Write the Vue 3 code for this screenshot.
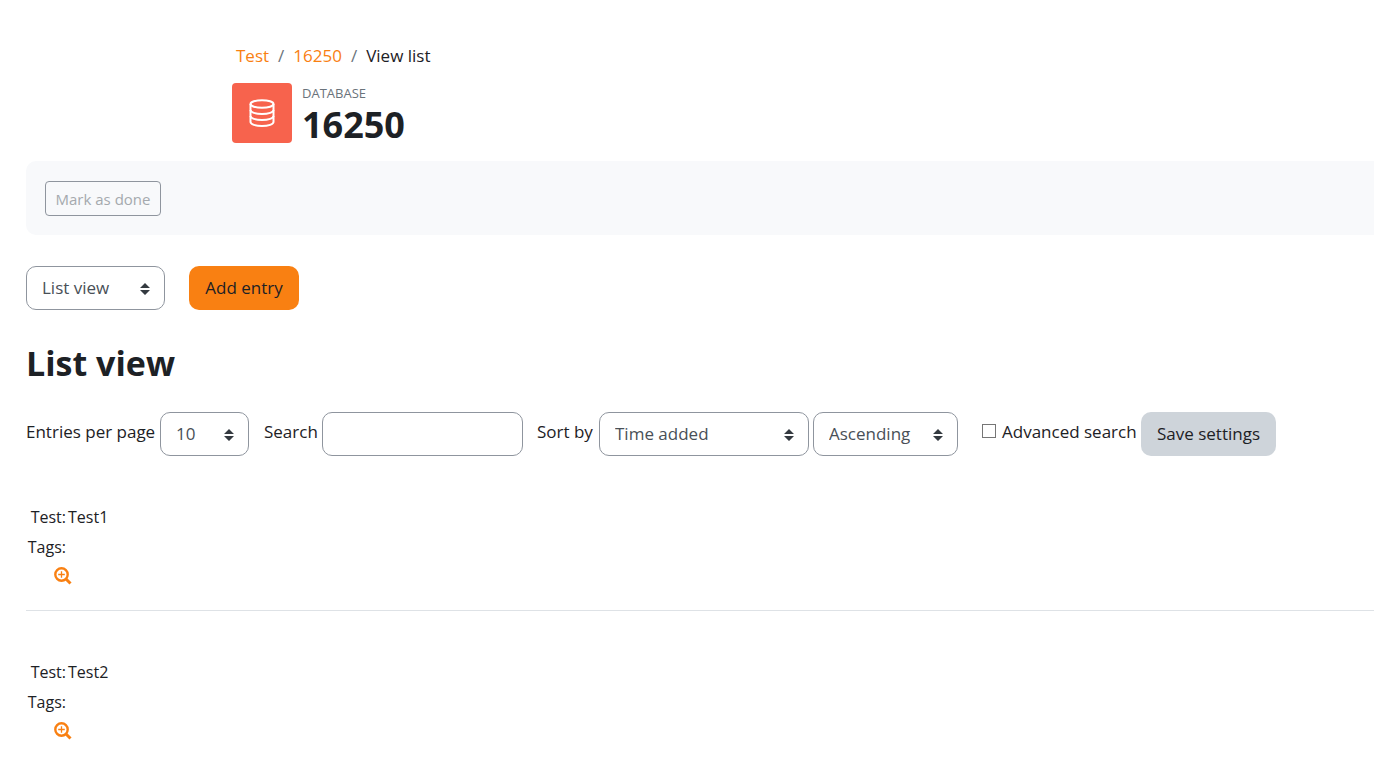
<script setup>
import { ref } from 'vue'

const viewMode = ref('List view')
const perPage = ref('10')
const keyword = ref('')
const sortField = ref('Time added')
const sortOrder = ref('Ascending')
const advanced = ref(false)

// database entries shown in the list
const entries = [
  { id: 1, value: 'Test1' },
  { id: 2, value: 'Test2' }
]
</script>

<template>
  <div class="page">
    <header class="page-header">
      <nav class="breadcrumb" aria-label="Breadcrumb">
        <a href="#">Test</a>
        <span class="divider">/</span>
        <a href="#">16250</a>
        <span class="divider">/</span>
        <span>View list</span>
      </nav>
      <div class="activity">
        <div class="activity-icon">
          <svg viewBox="0 0 26 28" width="26" height="28" fill="none" stroke="#fff" stroke-width="2">
            <ellipse cx="13" cy="5" rx="11.5" ry="3.8" />
            <path d="M1.500 5v18c0 2.200 5.100 4 11.500 4s11.500-1.800 11.500-4V5" />
            <path d="M1.500 11c0 2.200 5.100 4 11.500 4s11.500-1.800 11.500-4" />
            <path d="M1.500 17c0 2.200 5.100 4 11.500 4s11.500-1.800 11.500-4" />
          </svg>
        </div>
        <div class="activity-title">
          <div class="activity-type">DATABASE</div>
          <h1>16250</h1>
        </div>
      </div>
    </header>

    <div class="completion">
      <button type="button" class="btn-done" disabled>Mark as done</button>
    </div>

    <!-- view switcher -->
    <div class="actions">
      <div class="select mode">
        <select v-model="viewMode" aria-label="View mode">
          <option>List view</option>
          <option>Single view</option>
        </select>
        <svg class="caret" viewBox="0 0 10 12" width="10" height="12"><path d="M5 0l5 5H0zM0 7h10l-5 5z" /></svg>
      </div>
      <button type="button" class="btn btn-primary">Add entry</button>
    </div>

    <h2>List view</h2>

    <!-- filters -->
    <form class="filters" @submit.prevent>
      <label for="perpage" class="label-page">Entries per page</label>
      <div class="select count">
        <select id="perpage" v-model="perPage">
          <option>10</option>
          <option>20</option>
          <option>50</option>
        </select>
        <svg class="caret" viewBox="0 0 10 12" width="10" height="12"><path d="M5 0l5 5H0zM0 7h10l-5 5z" /></svg>
      </div>
      <label for="search" class="label-search">Search</label>
      <input id="search" v-model="keyword" type="text" class="search" />
      <label for="sort" class="label-sort">Sort by</label>
      <div class="select field">
        <select id="sort" v-model="sortField">
          <option>Time added</option>
          <option>Time modified</option>
        </select>
        <svg class="caret" viewBox="0 0 10 12" width="10" height="12"><path d="M5 0l5 5H0zM0 7h10l-5 5z" /></svg>
      </div>
      <div class="select order">
        <select v-model="sortOrder" aria-label="Order">
          <option>Ascending</option>
          <option>Descending</option>
        </select>
        <svg class="caret" viewBox="0 0 10 12" width="10" height="12"><path d="M5 0l5 5H0zM0 7h10l-5 5z" /></svg>
      </div>
      <input id="advanced" v-model="advanced" type="checkbox" class="check" />
      <label for="advanced" class="label-advanced">Advanced search</label>
      <button type="submit" class="btn btn-secondary">Save settings</button>
    </form>

    <section v-for="entry in entries" :key="entry.id" class="entry">
      <table>
        <tbody>
          <tr>
            <th scope="row">Test:</th>
            <td>{{ entry.value }}</td>
          </tr>
          <tr>
            <th scope="row">Tags:</th>
            <td></td>
          </tr>
        </tbody>
      </table>
      <a href="#" class="more" aria-label="Show more">
        <svg viewBox="0 0 18 18" width="18" height="18" fill="none" stroke="currentColor">
          <circle cx="7.500" cy="7.500" r="6.200" stroke-width="2.400" />
          <path d="M12 12l4.500 4.500" stroke-width="3" />
          <path d="M7.500 4.200v6.600M4.200 7.500h6.600" stroke-width="1.300" />
        </svg>
      </a>
    </section>
  </div>
</template>

<style>
body { margin: 0; background: #fff; }
</style>

<style scoped>
.page {
  padding: 42px 0 0 26px;
  overflow: hidden;
  font-family: "Segoe UI", "Open Sans", sans-serif;
  font-size: 17px; line-height: 28px; color: #1d2125;
}
.page-header { padding-left: 206px; }
a { color: #f98012; text-decoration: none; }

/* breadcrumb */
.breadcrumb { display: flex; gap: 9px; padding-left: 4px; }
.divider { color: #6a737b; }

/* activity header */
.activity { display: flex; gap: 10px; height: 60px; margin-top: 13px; }
.activity-icon {
  display: flex; align-items: center; justify-content: center;
  width: 60px; height: 60px; border-radius: 4px; background: #f7634d;
}
.activity-type { font-size: 13px; line-height: 20px; color: #6a737b; }
h1, h2 { margin: 0; font-size: 34px; line-height: 44px; font-weight: 700; }
h1 { font-size: 36px; }

.completion {
  margin-top: 18px; padding: 20px 19px 19px; border-radius: 10px 0 0 10px;
  background: #f8f9fb; line-height: 0;
}
.btn-done {
  box-sizing: border-box; width: 116px; height: 35px; padding: 0;
  border: 1px solid #8f959e; border-radius: 4px; background: transparent;
  font: inherit; font-size: 15px; line-height: 20px; color: #a5a9ae;
}

/* buttons and inputs */
.btn {
  height: 44px; padding: 0; border: 0; border-radius: 10px;
  font: inherit; color: #1d2125; white-space: nowrap; flex: none;
}
.btn-primary { width: 110px; background: #f98012; }
.btn-secondary { width: 135px; background: #ced4da; }
.select { position: relative; flex: none; }
.select select, .search {
  box-sizing: border-box; width: 100%; height: 44px; padding: 0 15px;
  border: 1px solid #8f959e; border-radius: 10px; background: #fff;
  appearance: none; font: inherit; color: #495057; display: block;
}
.caret { position: absolute; right: 15px; top: 17px; fill: #343a40; pointer-events: none; }

.actions { display: flex; gap: 24px; margin-top: 31px; }
.mode { width: 139px; }
h2 { margin-top: 31px; }

/* filter row */
.filters { display: flex; align-items: center; margin-top: 27px; white-space: nowrap; }
.filters label { flex: none; padding-bottom: 4px; }
.label-page { width: 134px; }
.count { width: 89px; }
.label-search { width: 58px; margin-left: 15px; }
.filters .search { width: 201px; flex: none; }
.label-sort { width: 62px; margin-left: 14px; }
.field { width: 210px; }
.order { width: 145px; margin-left: 4px; }
.check {
  appearance: none; box-sizing: border-box; flex: none;
  width: 14px; height: 14px; margin: 0 6px 6px 24px;
  border: 1px solid #767676; background: #fff;
}
.check:checked { background: #f98012; }
.label-advanced { width: 139px; }

/* entries */
.entry { padding: 46px 0 19px; }
.entry + .entry { border-top: 1px solid #dee2e6; }
table { border-collapse: collapse; font-size: 16px; }
th, td { height: 30px; padding: 0 1px; font-weight: 400; text-align: left; }
th { width: 39px; text-align: right; }
.more { display: block; width: 18px; height: 18px; margin: 5px 0 6px 28px; line-height: 0; }
</style>
